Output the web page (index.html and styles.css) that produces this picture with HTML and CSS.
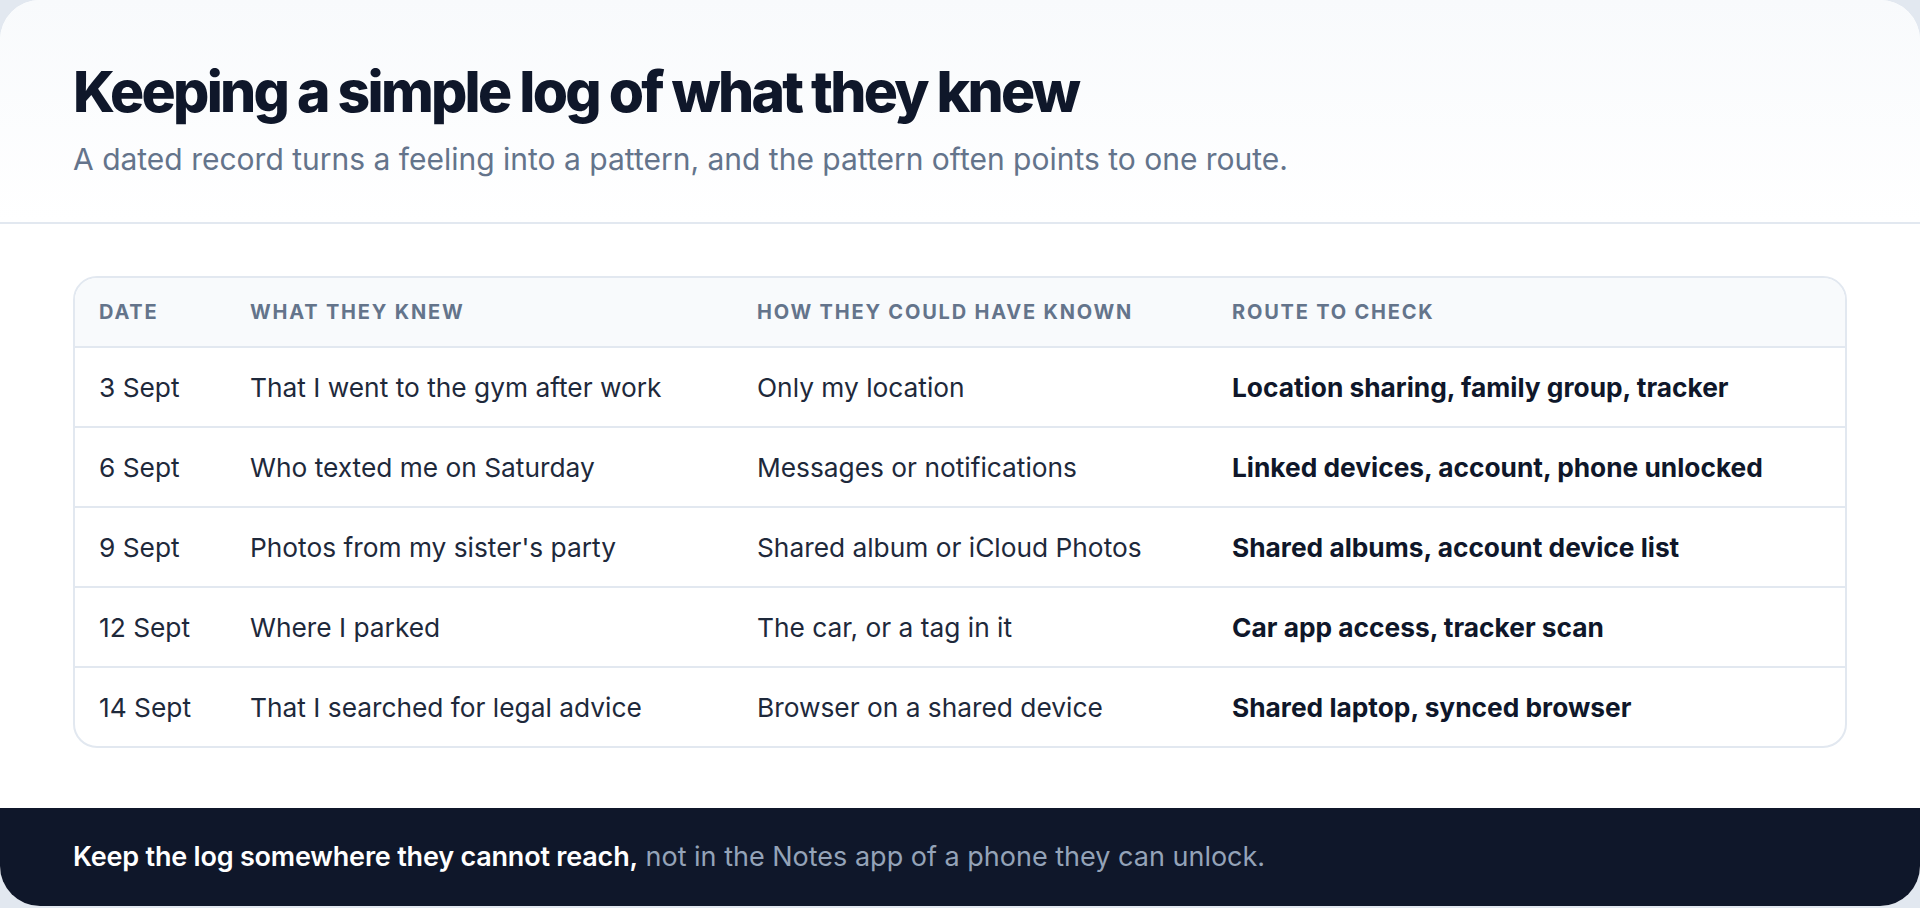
FILE: index.html
```html
<!DOCTYPE html>
<html lang="en">
<head>
    <meta charset="UTF-8">
    <meta name="viewport" content="width=device-width, initial-scale=1.0">
    <title>Keeping a log</title>
    <link rel="stylesheet" href="styles.css">
</head>
<body>
    <div class="card">
        <header class="card-header">
            <h1 class="title">Keeping a simple log of what they knew</h1>
            <p class="subtitle">A dated record turns a feeling into a pattern, and the pattern often points to one route.</p>
        </header>

        <section class="card-body">
            <div class="table-wrap">
                <table class="log-table">
                    <colgroup>
                        <col class="col-date">
                        <col class="col-knew">
                        <col class="col-how">
                        <col class="col-route">
                    </colgroup>
                    <thead>
                        <tr>
                            <th>Date</th>
                            <th>What they knew</th>
                            <th>How they could have known</th>
                            <th>Route to check</th>
                        </tr>
                    </thead>
                    <tbody>
                        <tr>
                            <td>3 Sept</td>
                            <td>That I went to the gym after work</td>
                            <td>Only my location</td>
                            <td class="route">Location sharing, family group, tracker</td>
                        </tr>
                        <tr>
                            <td>6 Sept</td>
                            <td>Who texted me on Saturday</td>
                            <td>Messages or notifications</td>
                            <td class="route">Linked devices, account, phone unlocked</td>
                        </tr>
                        <tr>
                            <td>9 Sept</td>
                            <td>Photos from my sister's party</td>
                            <td>Shared album or iCloud Photos</td>
                            <td class="route">Shared albums, account device list</td>
                        </tr>
                        <tr>
                            <td>12 Sept</td>
                            <td>Where I parked</td>
                            <td>The car, or a tag in it</td>
                            <td class="route">Car app access, tracker scan</td>
                        </tr>
                        <tr>
                            <td>14 Sept</td>
                            <td>That I searched for legal advice</td>
                            <td>Browser on a shared device</td>
                            <td class="route">Shared laptop, synced browser</td>
                        </tr>
                    </tbody>
                </table>
            </div>
        </section>

        <footer class="card-footer">
            <p><strong>Keep the log somewhere they cannot reach,</strong> not in the Notes app of a phone they can unlock.</p>
        </footer>
    </div>
</body>
</html>
```

FILE: styles.css
```css
body {
    margin: 0;
    background-color: #e2e8f0;
    font-family: Inter, "Noto Sans", sans-serif;
    color: #0f172a;
}

.card {
    height: 906px;
    background-color: #ffffff;
    border-radius: 40px;
    overflow: hidden;
    display: flex;
    flex-direction: column;
}

.card-header {
    padding: 58px 73px 42px;
    background: linear-gradient(180deg, #f8fafc 0%, #ffffff 100%);
    border-bottom: 2px solid #e2e8f0;
}

.title {
    margin: 0;
    font-size: 57px;
    font-weight: 800;
    line-height: 1.2;
    letter-spacing: -0.048em;
    color: #0f172a;
}

.subtitle {
    margin: 12px 0 0;
    font-size: 30px;
    line-height: 1.4;
    color: #64748b;
}

.card-body {
    flex: 1;
    padding: 52px 73px 0;
}

.table-wrap {
    border: 2px solid #e2e8f0;
    border-radius: 24px;
    overflow: hidden;
}

.log-table {
    width: 100%;
    table-layout: fixed;
    border-collapse: collapse;
    font-size: 26.3px;
}

.col-date {
    width: 151px;
}

.col-knew {
    width: 507px;
}

.col-how {
    width: 475px;
}

.log-table th {
    background-color: #f8fafc;
    height: 68px;
    padding: 0 24px;
    text-align: left;
    font-size: 20px;
    font-weight: 700;
    letter-spacing: 0.09em;
    text-transform: uppercase;
    color: #64748b;
    border-bottom: 2px solid #e2e8f0;
}

.log-table td {
    height: 78px;
    padding: 0 24px;
    color: #1e293b;
    border-bottom: 2px solid #e2e8f0;
}

.log-table tbody tr:last-child td {
    border-bottom: none;
}

.log-table .route {
    font-weight: 700;
    color: #0f172a;
}

.card-footer {
    background-color: #0f172a;
    padding: 35px 73px;
}

.card-footer p {
    margin: 0;
    font-size: 27px;
    line-height: 28px;
    color: #94a3b8;
}

.card-footer strong {
    color: #ffffff;
    font-weight: 600;
    letter-spacing: -0.2px;
}
```
